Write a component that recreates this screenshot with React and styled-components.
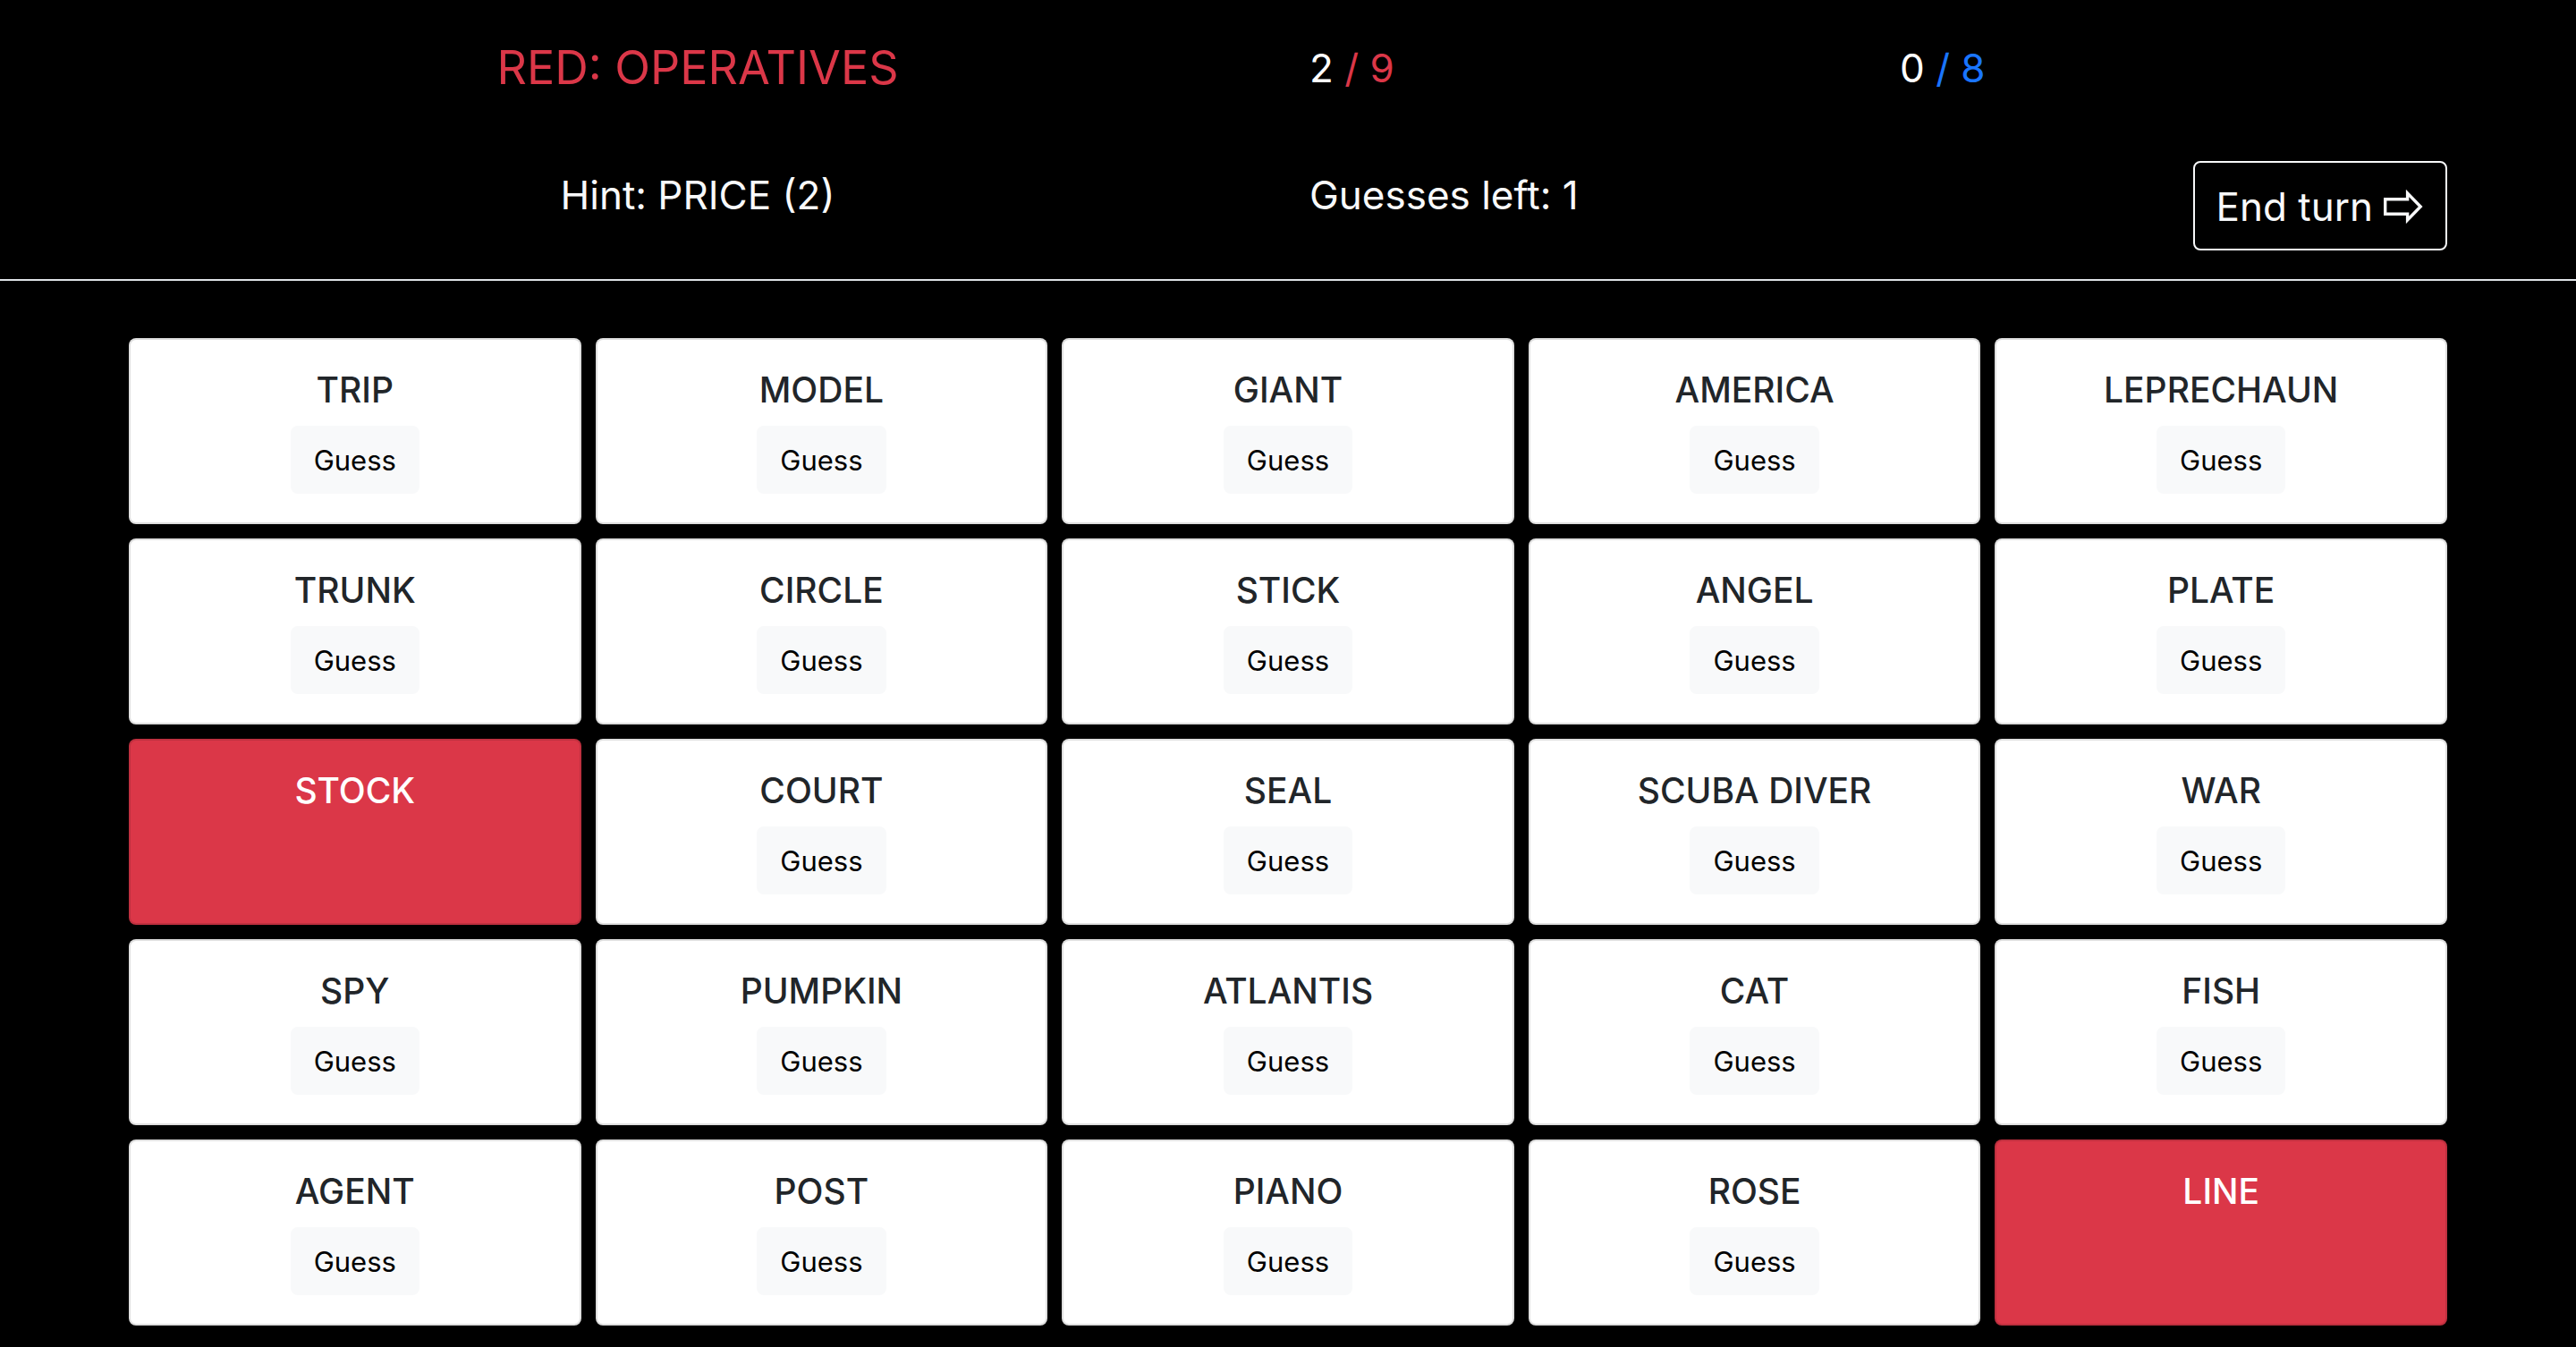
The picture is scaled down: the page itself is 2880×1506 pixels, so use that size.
import React, { useState } from "react";
import styled, { createGlobalStyle } from "styled-components";

const RED = "#db3748";
const BLUE = "#1a75ff";
const LIGHT = "#f8f9fa";

const GlobalStyle = createGlobalStyle`
  *, *::before, *::after { box-sizing: border-box; }
  body {
    margin: 0;
    background: #000;
    color: ${LIGHT};
    font-family: Inter, "Liberation Sans", sans-serif;
    font-size: 31px;
    line-height: 48px;
  }
  h1, h2, p { margin: 0; font-weight: 400; }
  button { font-family: inherit; cursor: pointer; }
`;

const Container = styled.div`
  width: 90%;
  margin: 0 auto;
`;

const Header = styled.header`
  padding: 38px 0 32px;
  border-bottom: 2px solid #dee2e6;
`;

const HeaderGrid = styled(Container)`
  display: grid;
  grid-template-columns: repeat(4, 1fr);
  gap: 66px 48px;
  align-items: start;
`;

const Title = styled.h1`
  grid-column: span 2;
  text-align: center;
  color: ${RED};
  font-size: 52px;
  line-height: 76px;
`;

const Info = styled.p`
  grid-column: span ${(p) => p.$span || 1};
  text-align: ${(p) => (p.$centered ? "center" : "left")};
  font-size: 44px;
  line-height: 76px;
`;

const Score = styled(Info)`
  color: ${(p) => p.$color};
`;

const Found = styled.span`
  color: #fff;
`;

const EndTurn = styled.button`
  justify-self: end;
  display: flex;
  align-items: center;
  gap: 12px;
  padding: 13px 24px 11px;
  border: 2px solid ${LIGHT};
  border-radius: 8px;
  background: transparent;
  color: ${LIGHT};
  font-size: 44px;
  line-height: 72px;
`;

const Board = styled(Container)`
  display: grid;
  grid-template-columns: repeat(5, 1fr);
  gap: 16px;
  padding: 64px 0 24px;
`;

const Card = styled.article`
  display: flex;
  flex-direction: column;
  align-items: center;
  gap: 16px;
  min-height: 208px;
  padding: 32px;
  border: 2px solid rgba(0, 0, 0, 0.125);
  border-radius: 8px;
  background: ${(p) => (p.$revealed ? RED : "#fff")};
  color: ${(p) => (p.$revealed ? "#fff" : "#212529")};
`;

const Word = styled.h2`
  && { font-weight: 500; }
  font-size: 39px;
  line-height: 48px;
`;

const Guess = styled.button`
  padding: 13px 24px 11px;
  border: 2px solid ${LIGHT};
  border-radius: 8px;
  background: ${LIGHT};
  color: #000;
  font-size: 31px;
  line-height: 48px;
`;

const words = [
  "TRIP", "MODEL", "GIANT", "AMERICA", "LEPRECHAUN",
  "TRUNK", "CIRCLE", "STICK", "ANGEL", "PLATE",
  "STOCK", "COURT", "SEAL", "SCUBA DIVER", "WAR",
  "SPY", "PUMPKIN", "ATLANTIS", "CAT", "FISH",
  "AGENT", "POST", "PIANO", "ROSE", "LINE",
];

function ArrowIcon() {
  return (
    <svg width="45" height="38" viewBox="0 0 45 38" fill="none" stroke="currentColor" strokeWidth="3.4" aria-hidden="true">
      <path d="M1.7 10.8H26.6V4L41.2 19L26.6 34V27.2H1.7Z" strokeMiterlimit="10" />
    </svg>
  );
}

export default function App() {
  const [revealed] = useState(["STOCK", "LINE"]);
  return (
    <>
      <GlobalStyle />
      <Header>
        <HeaderGrid>
          <Title>RED: OPERATIVES</Title>
          <Score $color={RED}><Found>2</Found> / 9</Score>
          <Score $color={BLUE}><Found>0</Found> / 8</Score>
          <Info $span={2} $centered>Hint: PRICE (2)</Info>
          <Info>Guesses left: 1</Info>
          <EndTurn type="button">End turn <ArrowIcon /></EndTurn>
        </HeaderGrid>
      </Header>
      <Board as="main">
        {words.map((word) => {
          const isRevealed = revealed.includes(word);
          return (
            <Card key={word} $revealed={isRevealed}>
              <Word>{word}</Word>
              {!isRevealed && <Guess type="button">Guess</Guess>}
            </Card>
          );
        })}
      </Board>
    </>
  );
}
